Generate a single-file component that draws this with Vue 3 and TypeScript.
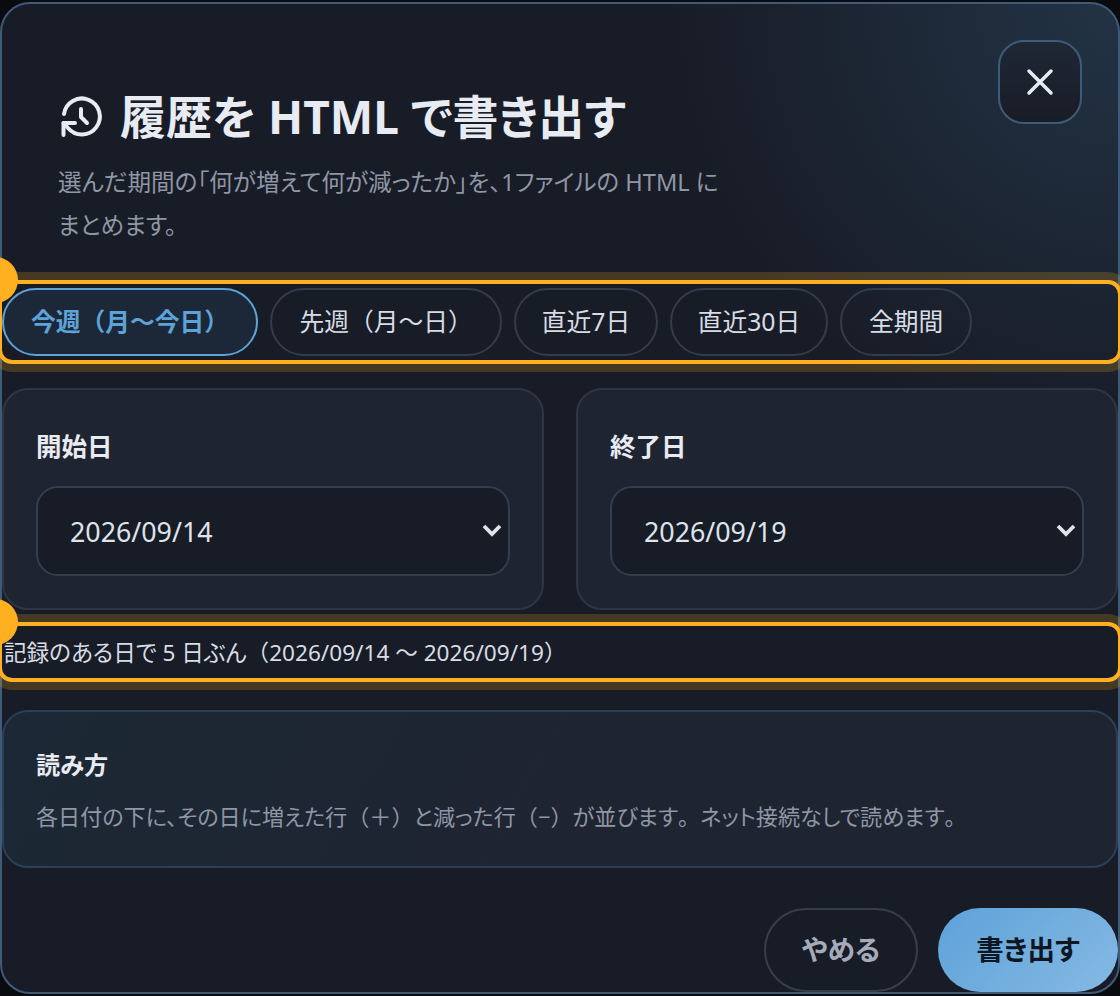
<script setup lang="ts">
import { ref } from 'vue'

const presets = [
  { label: '今週（月〜今日）', width: 256 },
  { label: '先週（月〜日）', width: 232 },
  { label: '直近7日', width: 144 },
  { label: '直近30日', width: 158 },
  { label: '全期間', width: 132 },
]
const active = ref(0)
const fields = [
  { label: '開始日', value: '2026/09/14' },
  { label: '終了日', value: '2026/09/19' },
]
</script>

<template>
  <section class="dialog" role="dialog" aria-labelledby="dialog-title">
    <button class="close" type="button" aria-label="閉じる">
      <svg viewBox="0 0 24 24" width="44" height="44" fill="none" stroke="currentColor" stroke-width="1.9" stroke-linecap="round">
        <path d="M6 6l12 12M18 6L6 18" />
      </svg>
    </button>

    <header class="head">
      <h1 id="dialog-title" class="title">
        <svg class="title-icon" viewBox="0 0 50 50" fill="none" stroke="currentColor" stroke-width="4" stroke-linecap="round" stroke-linejoin="round">
          <path d="M6 22A18 18 0 1 1 10 36L5.5 31" />
          <path d="M23 17v8l6 6" />
          <path d="M17 31H5.5V43" />
        </svg>
        <span>履歴を HTML で書き出す</span>
      </h1>
      <p class="lead">選んだ期間の「何が増えて何が減ったか」を、1ファイルの HTML にまとめます。</p>
    </header>

    <div class="presets marked">
      <button
        v-for="(preset, i) in presets"
        :key="preset.label"
        type="button"
        class="chip"
        :class="{ on: active === i }"
        :style="{ width: preset.width + 'px' }"
        @click="active = i"
      >{{ preset.label }}</button>
      <span class="pin"></span>
    </div>

    <div class="fields">
      <label v-for="field in fields" :key="field.label" class="field">
        <span class="field-label">{{ field.label }}</span>
        <span class="select-wrap">
          <select class="select">
            <option>{{ field.value }}</option>
          </select>
          <svg class="chevron" viewBox="0 0 20 14" fill="none" stroke="currentColor" stroke-width="3.8">
            <path d="M2 3l8 8 8-8" />
          </svg>
        </span>
      </label>
    </div>

    <p class="summary marked">記録のある日で 5 日ぶん<span class="wide">（</span>2026/09/14 〜 2026/09/19<span class="wide">）</span><span class="pin"></span></p>

    <div class="info">
      <h2 class="info-title">読み方</h2>
      <p class="info-body">各日付の下に、その日に増えた行<span class="wide">（＋）</span>と減った行<span class="wide">（−）</span>が並びます<span class="wide">。</span>ネット接続なしで読めます<span class="wide">。</span></p>
    </div>

    <footer class="actions">
      <button type="button" class="btn ghost">やめる</button>
      <button type="button" class="btn primary">書き出す</button>
    </footer>
  </section>
</template>

<style>
html, body {
  margin: 0;
  background: #0a0b0e;
  overflow: hidden;
}
</style>

<style scoped>
* {
  box-sizing: border-box;
}
.dialog {
  position: relative;
  width: 1120px;
  height: 992px;
  margin-top: 2px;
  border: 2px solid #3f5b78;
  border-radius: 30px;
  background:
    radial-gradient(circle at 100% 0, #223345 0, rgba(34, 51, 69, 0) 450px),
    #181c26;
  color: #e8ebf2;
  font-family: "Noto Sans", "Noto Sans CJK JP", sans-serif;
  font-feature-settings: "palt";
}
.wide {
  font-feature-settings: normal;
}
.close {
  position: absolute;
  top: 36px;
  right: 36px;
  display: flex;
  align-items: center;
  justify-content: center;
  width: 84px;
  height: 84px;
  padding: 0;
  border: 2px solid #3f5b78;
  border-radius: 26px;
  background: linear-gradient(180deg, #1f2735, #181c26);
  color: #e8ebf2;
}
.head {
  height: 280px;
  padding: 82px 56px 0;
}
.title {
  display: flex;
  align-items: center;
  gap: 12px;
  margin: 0;
  font-size: 46px;
  line-height: 60px;
  font-weight: 700;
}
.title-icon {
  flex: none;
  width: 50px;
  height: 50px;
  margin-top: 2px;
}
.lead {
  width: 680px;
  margin: 15px 0 0;
  font-size: 23.6px;
  line-height: 43px;
  color: #8f96a5;
}
.marked {
  position: relative;
  border-radius: 10px;
  box-shadow: 0 0 0 4px #ffb020, 0 0 0 12px rgba(255, 176, 32, 0.2);
}
.pin {
  position: absolute;
  left: -30px;
  top: -27px;
  width: 46px;
  height: 46px;
  border-radius: 50%;
  background: #ffb020;
}
.presets {
  display: flex;
  gap: 12px;
  height: 76px;
  padding-top: 4px;
}
.chip {
  height: 68px;
  padding: 0 0 4px;
  border: 2px solid #333c4c;
  border-radius: 34px;
  background: transparent;
  color: #d8dce4;
  font: inherit;
  font-feature-settings: normal;
  font-size: 24.75px;
}
.chip.on {
  border-color: #5ea3d8;
  background: #1c2838;
  color: #5ea3d8;
  font-weight: 700;
}
.fields {
  display: grid;
  grid-template-columns: 1fr 1fr;
  gap: 32px;
  margin-top: 28px;
}
.field {
  display: flex;
  flex-direction: column;
  height: 222px;
  padding: 38px 32px 0;
  border: 2px solid #2e3646;
  border-radius: 26px;
  background: #1f2431;
}
.field-label {
  font-size: 25.5px;
  line-height: 36px;
  font-weight: 700;
}
.select-wrap {
  position: relative;
  display: block;
  margin-top: 22px;
}
.select {
  display: block;
  width: 100%;
  height: 90px;
  padding: 0 32px;
  border: 2px solid #353e4e;
  border-radius: 22px;
  background: #171c26;
  color: #dfe3ea;
  font: inherit;
  font-size: 26.8px;
  appearance: none;
}
.chevron {
  position: absolute;
  right: 8px;
  top: 37px;
  width: 20px;
  height: 14px;
  color: #dfe3ea;
  pointer-events: none;
}
.summary {
  height: 52px;
  margin: 16px 0 0;
  padding-left: 2px;
  font-size: 22.6px;
  line-height: 54px;
  color: #d8dce4;
}
.info {
  height: 158px;
  margin-top: 32px;
  padding: 33px 32px 0;
  border: 2px solid #2b3f56;
  border-radius: 26px;
  background: linear-gradient(120deg, #1c2835, #1f2431 55%);
}
.info-title {
  margin: 0;
  font-size: 24.2px;
  line-height: 40px;
  font-weight: 700;
}
.info-body {
  margin: 11px 0 0;
  font-size: 22.1px;
  line-height: 40px;
  color: #8f96a5;
}
.actions {
  display: flex;
  justify-content: flex-end;
  gap: 20px;
  margin-top: 40px;
}
.btn {
  height: 84px;
  padding: 0 0 5px;
  border-radius: 42px;
  font: inherit;
  font-size: 27.5px;
  font-weight: 700;
}
.ghost {
  width: 154px;
  border: 2px solid #363f4e;
  background: transparent;
  color: #a5abb8;
}
.primary {
  width: 180px;
  border: 0;
  background: linear-gradient(135deg, #5ea2d9, #85b9e3);
  color: #0e1622;
}
</style>
